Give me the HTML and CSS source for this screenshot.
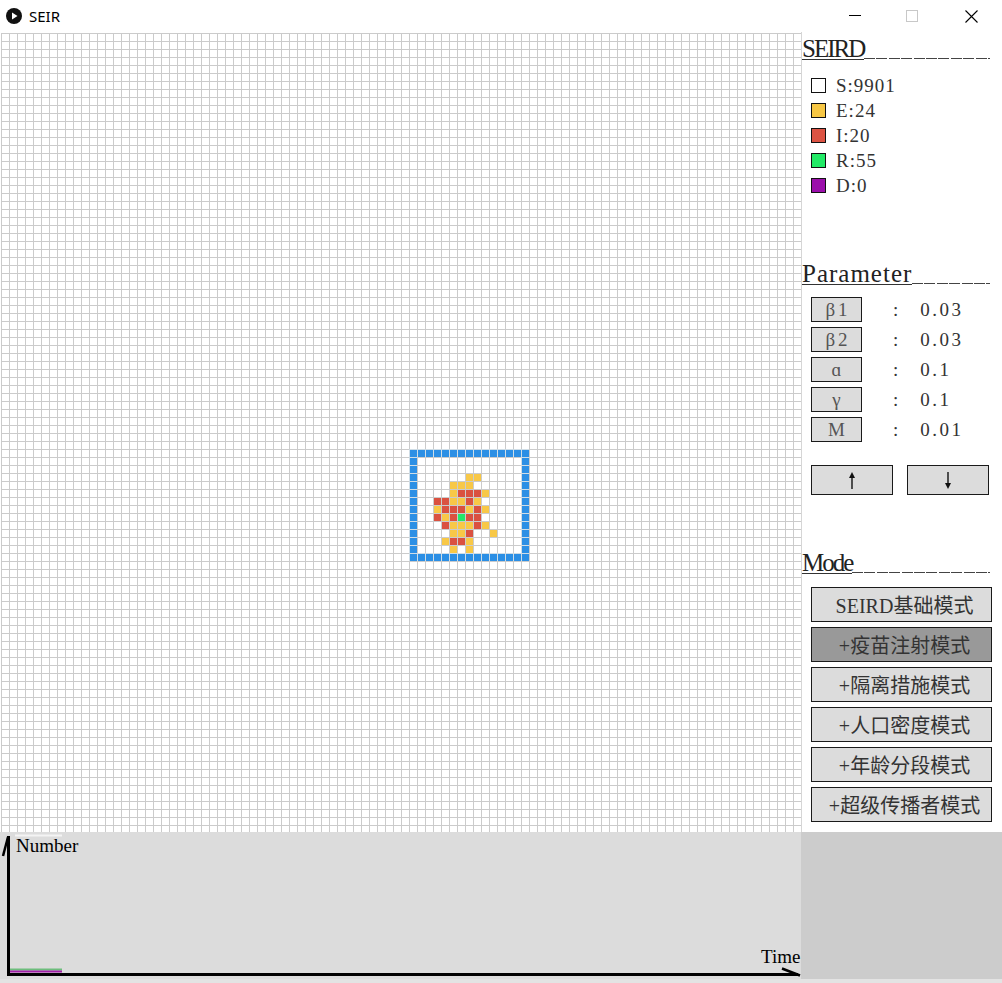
FILE: index.html
```html
<!DOCTYPE html>
<html lang="zh">
<head>
<meta charset="utf-8">
<title>SEIR</title>
<link rel="stylesheet" href="styles.css">
</head>
<body>
<div class="titlebar">
  <svg class="app-icon" width="16" height="16" viewBox="0 0 16 16"><circle cx="8" cy="8" r="8" fill="#111"/><polygon points="6,4.5 11.5,8 6,11.5" fill="#fff"/></svg>
  <span class="app-title">SEIR</span>
  <div class="win-controls">
    <div class="win-btn min"><svg width="12" height="12" viewBox="0 0 12 12"><line x1="0" y1="5.5" x2="12" y2="5.5" stroke="#000" stroke-width="1"/></svg></div>
    <div class="win-btn max"><svg width="12" height="12" viewBox="0 0 12 12"><rect x="0.5" y="0.5" width="11" height="11" fill="none" stroke="#c8c8c8" stroke-width="1"/></svg></div>
    <div class="win-btn close"><svg width="13" height="13" viewBox="0 0 13 13"><path d="M0.5 0.5 L12.5 12.5 M12.5 0.5 L0.5 12.5" stroke="#000" stroke-width="1.1" fill="none"/></svg></div>
  </div>
</div>
<div class="main">
  <div class="board">
    <div class="field">
      <div class="wall" style="grid-area:53/52/54/67"></div>
      <div class="wall" style="grid-area:66/52/67/67"></div>
      <div class="wall" style="grid-area:54/52/66/53"></div>
      <div class="wall" style="grid-area:54/66/66/67"></div>

      <div class="cell e" style="grid-area:56/59"></div>
      <div class="cell e" style="grid-area:56/60"></div>
      <div class="cell e" style="grid-area:57/57"></div>
      <div class="cell e" style="grid-area:57/58"></div>
      <div class="cell e" style="grid-area:57/59"></div>
      <div class="cell e" style="grid-area:58/57"></div>
      <div class="cell i" style="grid-area:58/58"></div>
      <div class="cell i" style="grid-area:58/59"></div>
      <div class="cell i" style="grid-area:58/60"></div>
      <div class="cell e" style="grid-area:58/61"></div>
      <div class="cell i" style="grid-area:59/55"></div>
      <div class="cell i" style="grid-area:59/56"></div>
      <div class="cell e" style="grid-area:59/57"></div>
      <div class="cell e" style="grid-area:59/58"></div>
      <div class="cell i" style="grid-area:59/59"></div>
      <div class="cell e" style="grid-area:59/60"></div>
      <div class="cell e" style="grid-area:60/55"></div>
      <div class="cell i" style="grid-area:60/56"></div>
      <div class="cell i" style="grid-area:60/57"></div>
      <div class="cell i" style="grid-area:60/58"></div>
      <div class="cell e" style="grid-area:60/59"></div>
      <div class="cell i" style="grid-area:60/60"></div>
      <div class="cell e" style="grid-area:60/61"></div>
      <div class="cell i" style="grid-area:61/55"></div>
      <div class="cell e" style="grid-area:61/56"></div>
      <div class="cell i" style="grid-area:61/57"></div>
      <div class="cell r" style="grid-area:61/58"></div>
      <div class="cell i" style="grid-area:61/59"></div>
      <div class="cell i" style="grid-area:61/60"></div>
      <div class="cell i" style="grid-area:62/56"></div>
      <div class="cell e" style="grid-area:62/57"></div>
      <div class="cell e" style="grid-area:62/58"></div>
      <div class="cell e" style="grid-area:62/59"></div>
      <div class="cell i" style="grid-area:62/60"></div>
      <div class="cell e" style="grid-area:62/61"></div>
      <div class="cell e" style="grid-area:63/57"></div>
      <div class="cell e" style="grid-area:63/58"></div>
      <div class="cell i" style="grid-area:63/59"></div>
      <div class="cell e" style="grid-area:63/62"></div>
      <div class="cell e" style="grid-area:64/56"></div>
      <div class="cell i" style="grid-area:64/57"></div>
      <div class="cell i" style="grid-area:64/58"></div>
      <div class="cell e" style="grid-area:64/59"></div>
      <div class="cell e" style="grid-area:65/57"></div>
      <div class="cell e" style="grid-area:65/59"></div>
    </div>
  </div>

  <div class="side">
    <div class="heading h-seird"><span class="heading-text">SEIRD</span><span class="heading-fill"></span></div>
    <ul class="legend">
      <li><span class="swatch s"></span><span class="legend-text">S:9901</span></li>
      <li><span class="swatch e"></span><span class="legend-text">E:24</span></li>
      <li><span class="swatch i"></span><span class="legend-text">I:20</span></li>
      <li><span class="swatch r"></span><span class="legend-text">R:55</span></li>
      <li><span class="swatch d"></span><span class="legend-text">D:0</span></li>
    </ul>

    <div class="heading h-param"><span class="heading-text">Parameter</span><span class="heading-fill"></span></div>
    <div class="params">
      <div class="param"><span class="param-key">β1</span><span class="colon">:</span><span class="param-val">0.03</span></div>
      <div class="param"><span class="param-key">β2</span><span class="colon">:</span><span class="param-val">0.03</span></div>
      <div class="param"><span class="param-key">ɑ</span><span class="colon">:</span><span class="param-val">0.1</span></div>
      <div class="param"><span class="param-key">γ</span><span class="colon">:</span><span class="param-val">0.1</span></div>
      <div class="param"><span class="param-key">M</span><span class="colon">:</span><span class="param-val">0.01</span></div>
    </div>
    <div class="arrows">
      <div class="arrow-btn"><svg width="8" height="17" viewBox="0 0 8 17"><polygon points="4,0 7,6 1,6" fill="#111"/><line x1="4" y1="5" x2="4" y2="17" stroke="#111" stroke-width="1.4"/></svg></div>
      <div class="arrow-btn"><svg width="8" height="17" viewBox="0 0 8 17"><polygon points="4,17 7,11 1,11" fill="#111"/><line x1="4" y1="0" x2="4" y2="12" stroke="#111" stroke-width="1.4"/></svg></div>
    </div>

    <div class="heading h-mode"><span class="heading-text">Mode</span><span class="heading-fill"></span></div>
    <div class="modes">
      <div class="mode-btn">SEIRD基础模式</div>
      <div class="mode-btn active">+疫苗注射模式</div>
      <div class="mode-btn">+隔离措施模式</div>
      <div class="mode-btn">+人口密度模式</div>
      <div class="mode-btn">+年龄分段模式</div>
      <div class="mode-btn">+超级传播者模式</div>
    </div>
  </div>

  <div class="chart">
    <svg class="chart-svg" width="801" height="147" viewBox="0 0 801 147">
      <line x1="15" y1="3.5" x2="62" y2="3.5" stroke="#f4f4f4" stroke-width="2"/>
      <line x1="10" y1="137.5" x2="62" y2="137.5" stroke="#6dbd7c" stroke-width="2"/>
      <line x1="10" y1="139.5" x2="62" y2="139.5" stroke="#a21ea8" stroke-width="2"/>
      <rect x="7" y="4" width="3" height="140" fill="#000"/>
      <line x1="3" y1="24" x2="8" y2="5" stroke="#000" stroke-width="2.5"/>
      <rect x="7" y="141" width="791" height="3" fill="#000"/>
      <line x1="782" y1="136.5" x2="800" y2="143.5" stroke="#000" stroke-width="2.5"/>
      <text class="axis-label" x="16" y="20">Number</text>
      <text class="axis-label" x="761" y="131">Time</text>
    </svg>
  </div>
  <div class="corner"></div>
</div>
</body>
</html>
```
FILE: styles.css
```css
* { box-sizing: border-box; }
html, body { margin: 0; padding: 0; }
body {
  width: 1002px;
  height: 983px;
  overflow: hidden;
  background: #e3e3e3;
  font-family: "Liberation Serif", "Noto Sans CJK SC", serif;
  color: #222;
}

/* title bar */
.titlebar {
  height: 32px;
  background: #fff;
  display: flex;
  align-items: center;
  font-family: "Noto Sans", sans-serif;
}
.app-icon { margin-left: 6px; display: block; }
.app-title { margin-left: 7px; font-size: 15px; color: #000; }
.win-controls { margin-left: auto; display: flex; height: 32px; }
.win-btn { height: 32px; display: flex; align-items: center; justify-content: center; }
.win-btn svg { display: block; }
.win-btn.min { width: 57px; }
.win-btn.max { width: 57px; }
.win-btn.close { width: 62px; }

/* main layout */
.main {
  display: grid;
  grid-template-columns: 801px 201px;
  grid-template-rows: 800px 147px;
}

/* simulation board */
.board {
  background: #fff;
  padding: 1px 0 0 1px;
  overflow: hidden;
}
.field {
  display: grid;
  grid-template-columns: repeat(100, 8px);
  grid-template-rows: repeat(100, 8px);
  width: 800px;
  height: 800px;
  background:
    linear-gradient(to right, #cbcbcb 1px, transparent 1px) 0 0 / 8px 8px,
    linear-gradient(to bottom, #cbcbcb 1px, transparent 1px) 0 0 / 8px 8px,
    #fff;
}
.wall {
  background:
    linear-gradient(to right, #cfdde6 1px, transparent 1px) 0 0 / 8px 8px,
    linear-gradient(to bottom, #cfdde6 1px, transparent 1px) 0 0 / 8px 8px,
    #2b8fe5;
}
.cell {
  width: 7px;
  height: 7px;
  margin: 1px 0 0 1px;
}
.cell.e { background: #f8c847; }
.cell.i { background: #da5140; }
.cell.r { background: #22e86a; }

/* side panel */
.side {
  background: #fff;
  border-left: 1px solid #d6d6d6;
  padding-left: 9px;
  display: flex;
  flex-direction: column;
}
.heading {
  margin-left: -9px;
  width: 188px;
  height: 21px;
  display: flex;
  font-size: 25px;
  line-height: 20px;
  color: #222;
  white-space: nowrap;
}
.heading-text { border-bottom: 1px solid #333; }
.heading-fill {
  flex: 1;
  border-bottom: 1px solid transparent;
  background: repeating-linear-gradient(to right, #444 0 11px, transparent 11px 12.4px) left bottom / 100% 1px no-repeat;
}
.h-seird { margin-top: 7px; }
.h-seird .heading-text { letter-spacing: -2px; }
.h-param { margin-top: 66px; }
.h-param .heading-text { letter-spacing: 1px; }
.h-mode { margin-top: 58px; }
.h-mode .heading-text { letter-spacing: -2px; }

.legend {
  list-style: none;
  margin: 13px 0 0 0;
  padding: 0;
}
.legend li {
  height: 25px;
  display: flex;
  align-items: center;
}
.swatch {
  width: 15px;
  height: 15px;
  border: 1px solid #111;
  display: block;
}
.swatch.s { background: #fff; }
.swatch.e { background: #f7c744; }
.swatch.i { background: #dc5343; }
.swatch.r { background: #22ea66; }
.swatch.d { background: #9b0fab; }
.legend-text {
  margin-left: 10px;
  font-size: 19px;
  letter-spacing: 1px;
  color: #333;
}

.params {
  margin-top: 12px;
  display: flex;
  flex-direction: column;
  gap: 5px;
}
.param {
  height: 25px;
  display: flex;
  align-items: center;
}
.param-key {
  width: 51px;
  height: 25px;
  border: 1px solid #1a1a1a;
  background: #dcdcdc;
  display: flex;
  align-items: center;
  justify-content: center;
  font-size: 19px;
  letter-spacing: 3px;
  padding-left: 3px;
  color: #555;
}
.colon {
  margin-left: 31px;
  font-size: 19px;
  color: #333;
}
.param-val {
  margin-left: 22px;
  font-size: 19px;
  letter-spacing: 2.5px;
  color: #333;
}

.arrows {
  margin-top: 23px;
  display: flex;
  gap: 14px;
}
.arrow-btn {
  width: 82px;
  height: 30px;
  border: 1px solid #1a1a1a;
  background: #dcdcdc;
  display: flex;
  align-items: center;
  justify-content: center;
}
.arrow-btn svg { display: block; }

.modes {
  margin-top: 13px;
  display: flex;
  flex-direction: column;
  gap: 5px;
}
.mode-btn {
  width: 181px;
  height: 35px;
  border: 1px solid #1a1a1a;
  background: #dcdcdc;
  display: flex;
  align-items: center;
  justify-content: center;
  padding-left: 6px;
  font-size: 20px;
  color: #333;
  white-space: nowrap;
}
.mode-btn.active { background: #999; }

/* chart */
.chart { background: #dcdcdc; }
.chart-svg { display: block; }
.axis-label {
  font-family: "Liberation Serif", serif;
  font-size: 19px;
  fill: #000;
}
.corner { background: #cccccc; }
```
